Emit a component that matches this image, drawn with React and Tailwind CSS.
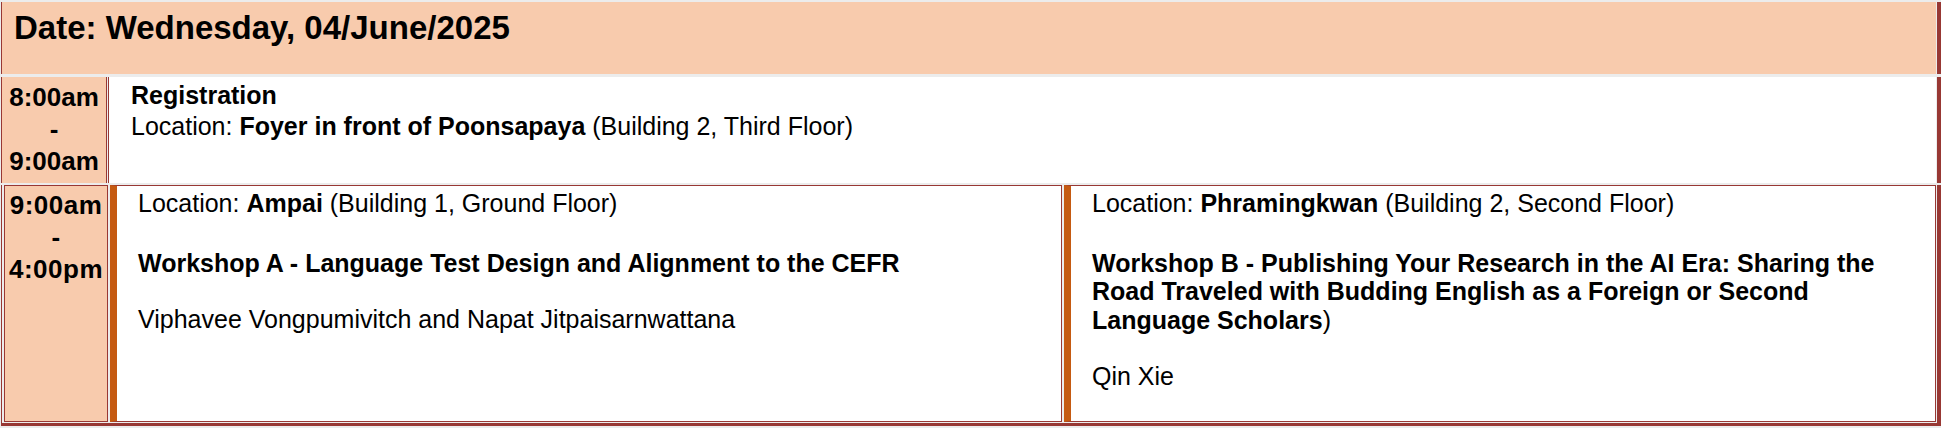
import React from 'react';

const sessions = [
  {
    room: 'Ampai',
    where: '(Building 1, Ground Floor)',
    title: ['Workshop A - Language Test Design and Alignment to the CEFR'],
    tail: '',
    speakers: 'Viphavee Vongpumivitch and Napat Jitpaisarnwattana',
    width: 'w-[952px]',
  },
  {
    room: 'Phramingkwan',
    where: '(Building 2, Second Floor)',
    title: [
      'Workshop B - Publishing Your Research in the AI Era: Sharing the',
      'Road Traveled with Budding English as a Foreign or Second',
      'Language Scholars',
    ],
    tail: ')',
    speakers: 'Qin Xie',
    width: 'flex-1',
  },
];

function TimeLabel({ from, to, wide }) {
  return (
    <div className={`text-center font-bold text-[26px] leading-[32px] ${wide ? 'tracking-[0.5px]' : ''}`}>
      <div>{from}</div>
      <div>-</div>
      <div>{to}</div>
    </div>
  );
}

export default function App() {
  return (
    <div className="w-[1941px] h-[428px] bg-[#ececec] pl-[1px] pt-[2px] text-black font-['Liberation_Sans',Arial,sans-serif] overflow-hidden">
      {/* date header */}
      <div className="h-[72px] flex border-l border-r-4 border-[#983834]">
        <div className="flex-1 mr-[1px] bg-[#f8cbad] pl-[12px] pt-[7px]">
          <h1 className="text-[33px] leading-[38px] font-bold">Date: Wednesday, 04/June/2025</h1>
        </div>
      </div>

      {/* registration */}
      <div className="mt-[3px] h-[106px] flex border-l border-r-4 border-[#983834]">
        <div className="w-[105px] bg-[#f8cbad] border-r border-[#983834] pt-[4px]">
          <TimeLabel from="8:00am" to="9:00am" />
        </div>
        <div className="flex-1 ml-[1px] mr-[1px] bg-white border-l border-[#983834] pl-[22px] pt-[3px] text-[25px] leading-[31px]">
          <p className="font-bold">Registration</p>
          <p>
            Location: <b>Foyer in front of Poonsapaya</b> (Building 2, Third Floor)
          </p>
        </div>
      </div>

      {/* workshops */}
      <div className="mt-[2px] h-[241px] flex gap-[2px] border-l border-r-4 border-b-[3px] border-[#983834] pl-[2px] pr-[1px] pb-[1px]">
        <div className="w-[104px] bg-[#f8cbad] border border-[#983834] pt-[3px]">
          <TimeLabel from="9:00am" to="4:00pm" wide />
        </div>
        {sessions.map((s) => (
          <div
            key={s.room}
            className={`${s.width} bg-white border border-l-[7px] border-[#983834] border-l-[#c55a11] pl-[21px] pt-[3px] text-[25px] leading-[28.5px]`}
          >
            <p className="mb-[31px]">
              Location: <b>{s.room}</b> {s.where}
            </p>
            <p className="font-bold mb-[28px]">
              {s.title.map((line, i) => (
                <React.Fragment key={i}>
                  {i > 0 && <br />}
                  {line}
                </React.Fragment>
              ))}
              {s.tail && <span className="font-normal">{s.tail}</span>}
            </p>
            <p>{s.speakers}</p>
          </div>
        ))}
      </div>
    </div>
  );
}
